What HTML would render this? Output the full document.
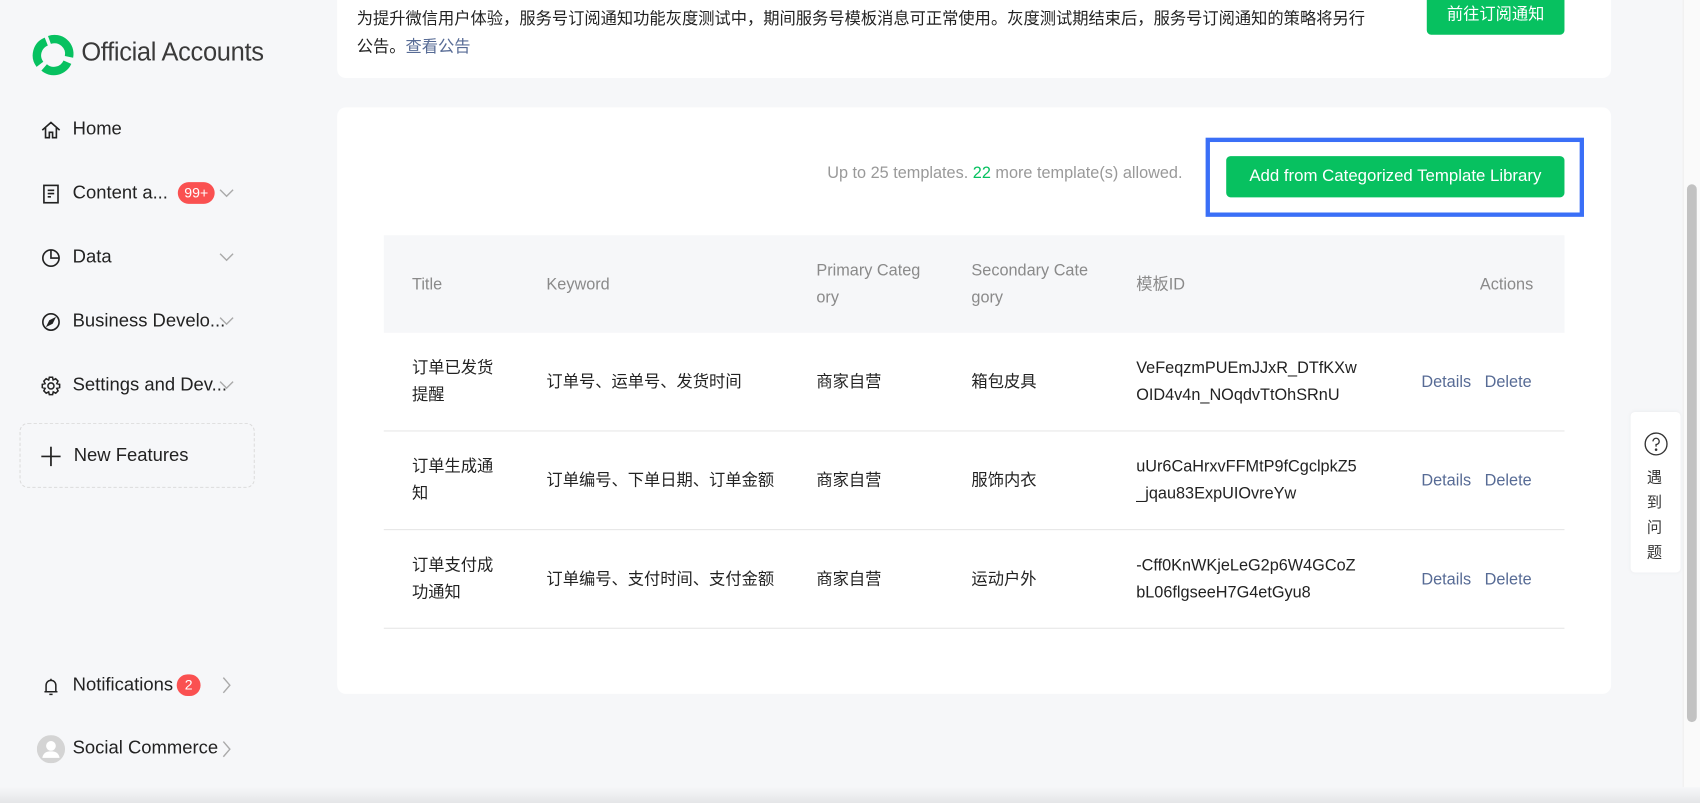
<!DOCTYPE html>
<html><head><meta charset="utf-8"><style>
*{box-sizing:border-box;margin:0;padding:0}
html,body{width:1700px;height:803px;overflow:hidden;background:#f6f7f9}
body{font-family:"Liberation Sans","Noto Sans CJK SC",sans-serif;color:#1f1f1f}
#w{position:absolute;left:0;top:0;width:1568px;height:741px;transform:scale(1.08418);transform-origin:0 0;background:#f6f7f9}
.a{position:absolute}
.nav{position:absolute;left:37px;font-size:17px;color:#222;display:flex;align-items:center;height:24px}
.nav svg{position:absolute;left:0;top:3px}
.nav span.t{position:absolute;left:30px;white-space:nowrap}
.card{position:absolute;background:#fff;border-radius:8px}
.th{position:absolute;font-size:15px;color:#8a8a8a;line-height:25px}
.td{position:absolute;font-size:15px;color:#222;line-height:25px}
.lnk{color:#576b95}
.badge{position:absolute;background:#fa5151;color:#fff;border-radius:10px;font-size:13px;text-align:center;line-height:20px;height:20px}
</style></head><body><div id="w">
<!-- logo -->
<svg class="a" style="left:30px;top:31px" width="39" height="39" viewBox="0 0 40 40">
<g fill="none" stroke="#07c160" stroke-width="8">
<path d="M7 29 A14 14 0 0 1 13 7.5"/>
<path d="M16 6 A14 14 0 0 1 34.5 22"/>
<path d="M33 27 A14 14 0 0 1 11 32"/>
</g></svg>
<div class="a" style="left:75px;top:35px;font-size:23.5px;color:#3a3a3a;letter-spacing:-0.3px">Official Accounts</div>

<div class="nav" style="top:107px"><svg width="20" height="20" viewBox="0 0 20 20" fill="none" stroke="#222" stroke-width="1.5"><path d="M2 10 L10 3 L18 10 M5 8 V17 H8.5 V12 H11.5 V17 H15 V8"/></svg><span class="t">Home</span></div>
<div class="nav" style="top:166px"><svg width="20" height="20" viewBox="0 0 20 20" fill="none" stroke="#222" stroke-width="1.5"><rect x="3.5" y="2" width="13" height="16"/><path d="M7 6.5H13M7 9.5H13M7 12.5H10"/></svg><span class="t">Content a...</span></div>
<div class="badge" style="left:164px;top:168px;width:34px">99+</div>
<div class="nav" style="top:225px"><svg width="20" height="20" viewBox="0 0 20 20" fill="none" stroke="#222" stroke-width="1.5"><circle cx="10" cy="10" r="7.5"/><path d="M10 2.5V10H17.5"/></svg><span class="t">Data</span></div>
<div class="nav" style="top:284px"><svg width="20" height="20" viewBox="0 0 20 20" fill="none" stroke="#222" stroke-width="1.5"><circle cx="10" cy="10" r="7.5"/><path d="M13 7L11 11L7 13L9 9Z" fill="#222"/></svg><span class="t">Business Develo...</span></div>
<div class="nav" style="top:343px"><svg width="20" height="20" viewBox="0 0 20 20" fill="none" stroke="#222" stroke-width="1.4"><path d="M8.5 2H11.5L12 4.5L14.3 3.3L16.5 5.5L15.4 7.8L18 8.5V11.5L15.4 12.2L16.6 14.5L14.4 16.7L12.1 15.5L11.5 18H8.5L7.9 15.5L5.6 16.7L3.4 14.5L4.6 12.2L2 11.5V8.5L4.6 7.8L3.4 5.5L5.6 3.3L7.9 4.5Z"/><circle cx="10" cy="10" r="2.8"/></svg><span class="t">Settings and Dev...</span></div>
<svg class="a" style="left:202px;top:173px" width="14" height="10" viewBox="0 0 14 10" fill="none" stroke="#aaa" stroke-width="1.3"><path d="M1 2L7 8L13 2"/></svg>
<svg class="a" style="left:202px;top:232px" width="14" height="10" viewBox="0 0 14 10" fill="none" stroke="#aaa" stroke-width="1.3"><path d="M1 2L7 8L13 2"/></svg>
<svg class="a" style="left:202px;top:291px" width="14" height="10" viewBox="0 0 14 10" fill="none" stroke="#aaa" stroke-width="1.3"><path d="M1 2L7 8L13 2"/></svg>
<svg class="a" style="left:202px;top:350px" width="14" height="10" viewBox="0 0 14 10" fill="none" stroke="#aaa" stroke-width="1.3"><path d="M1 2L7 8L13 2"/></svg>

<div class="a" style="left:18px;top:390px;width:217px;height:60px;border:1px dashed #dcdcdc;border-radius:8px"></div>
<svg class="a" style="left:38px;top:412px" width="18" height="18" viewBox="0 0 18 18" stroke="#222" stroke-width="1.6"><path d="M9 0V18M0 9H18"/></svg>
<div class="a" style="left:68px;top:410px;font-size:17px;color:#222">New Features</div>

<div class="nav" style="top:620px"><svg width="20" height="20" viewBox="0 0 20 20" fill="none" stroke="#222" stroke-width="1.4"><path d="M4 15H16M5.5 15V9A4.5 4.5 0 0 1 14.5 9V15M8.5 17.5H11.5M10 3V4.5"/></svg><span class="t">Notifications</span></div>
<div class="badge" style="left:163px;top:622px;width:22px">2</div>
<svg class="a" style="left:204px;top:624px" width="10" height="16" viewBox="0 0 10 16" fill="none" stroke="#aaa" stroke-width="1.3"><path d="M2 1L8 8L2 15"/></svg>
<svg class="a" style="left:34px;top:678px" width="26" height="26" viewBox="0 0 26 26"><circle cx="13" cy="13" r="13" fill="#d4d4d4"/><circle cx="13" cy="10" r="4.5" fill="#fff"/><path d="M5 21C6 16 9 15 13 15S20 16 21 21Z" fill="#fff"/></svg>
<div class="a" style="left:67px;top:680px;font-size:17px;color:#222">Social Commerce</div>
<svg class="a" style="left:204px;top:683px" width="10" height="16" viewBox="0 0 10 16" fill="none" stroke="#aaa" stroke-width="1.3"><path d="M2 1L8 8L2 15"/></svg>

<!-- card 1 -->
<div class="card" style="left:311px;top:-10px;width:1175px;height:82px"></div>
<div class="a" style="left:329px;top:5px;font-size:15px;line-height:26px;color:#222;width:945px">为提升微信用户体验，服务号订阅通知功能灰度测试中，期间服务号模板消息可正常使用。灰度测试期结束后，服务号订阅通知的策略将另行<br>公告。<span class="lnk">查看公告</span></div>
<div class="a" style="left:1316px;top:-4px;width:127px;height:36px;background:#07c160;border-radius:4px;color:#fff;font-size:15px;text-align:center;line-height:36px">前往订阅通知</div>

<!-- card 2 -->
<div class="card" style="left:311px;top:99px;width:1175px;height:541px"></div>
<div class="a" style="left:763px;top:151px;font-size:15px;color:#999;white-space:nowrap">Up to 25 templates. <span style="color:#07c160">22</span> more template(s) allowed.</div>
<div class="a" style="left:1112px;top:127px;width:349px;height:73px;border:4px solid #3a6ff7"></div>
<div class="a" style="left:1131px;top:144px;width:312px;height:38px;background:#07c160;border-radius:4px;color:#fff;font-size:15.5px;text-align:center;line-height:38px">Add from Categorized Template Library</div>

<div class="a" style="left:354px;top:217px;width:1089px;height:90px;background:#f6f7f9"></div>
<div class="th" style="left:380px;top:250px">Title</div>
<div class="th" style="left:504px;top:250px">Keyword</div>
<div class="th" style="left:753px;top:237px">Primary Categ<br>ory</div>
<div class="th" style="left:896px;top:237px">Secondary Cate<br>gory</div>
<div class="th" style="left:1048px;top:250px">模板ID</div>
<div class="th" style="left:1365px;top:250px">Actions</div>

<div class="a" style="left:354px;top:397px;width:1089px;height:1px;background:#e7e7e7"></div>
<div class="a" style="left:354px;top:488px;width:1089px;height:1px;background:#e7e7e7"></div>
<div class="a" style="left:354px;top:579px;width:1089px;height:1px;background:#e7e7e7"></div>

<div class="td" style="left:380px;top:327px">订单已发货<br>提醒</div>
<div class="td" style="left:504px;top:340px">订单号、运单号、发货时间</div>
<div class="td" style="left:753px;top:340px">商家自营</div>
<div class="td" style="left:896px;top:340px">箱包皮具</div>
<div class="td" style="left:1048px;top:327px">VeFeqzmPUEmJJxR_DTfKXw<br>OID4v4n_NOqdvTtOhSRnU</div>
<div class="td lnk" style="left:1311px;top:340px">Details&nbsp;&nbsp; Delete</div>

<div class="td" style="left:380px;top:418px">订单生成通<br>知</div>
<div class="td" style="left:504px;top:431px">订单编号、下单日期、订单金额</div>
<div class="td" style="left:753px;top:431px">商家自营</div>
<div class="td" style="left:896px;top:431px">服饰内衣</div>
<div class="td" style="left:1048px;top:418px">uUr6CaHrxvFFMtP9fCgclpkZ5<br>_jqau83ExpUIOvreYw</div>
<div class="td lnk" style="left:1311px;top:431px">Details&nbsp;&nbsp; Delete</div>

<div class="td" style="left:380px;top:509px">订单支付成<br>功通知</div>
<div class="td" style="left:504px;top:522px">订单编号、支付时间、支付金额</div>
<div class="td" style="left:753px;top:522px">商家自营</div>
<div class="td" style="left:896px;top:522px">运动户外</div>
<div class="td" style="left:1048px;top:509px">-Cff0KnWKjeLeG2p6W4GCoZ<br>bL06flgseeH7G4etGyu8</div>
<div class="td lnk" style="left:1311px;top:522px">Details&nbsp;&nbsp; Delete</div>

<!-- help float -->
<div class="a" style="left:1504px;top:380px;width:46px;height:148px;background:#fff;border-radius:4px;box-shadow:0 0 4px rgba(0,0,0,.05)"></div>
<svg class="a" style="left:1516px;top:398px" width="23" height="23" viewBox="0 0 24 24" fill="none" stroke="#333" stroke-width="1.3"><circle cx="12" cy="12" r="10.5"/><path d="M9 9.5A3 3 0 1 1 12 12.5V14.5"/><circle cx="12" cy="17.5" r=".6" fill="#333"/></svg>
<div class="a" style="left:1519px;top:429px;font-size:14px;line-height:23px;color:#333;width:16px">遇到问题</div>

<!-- scrollbar -->
<div class="a" style="left:1552px;top:0;width:16px;height:741px;background:#fafafa;border-left:1px solid #eee"></div>
<div class="a" style="left:1556px;top:170px;width:9px;height:496px;background:#c2c2c2;border-radius:5px"></div>
<div class="a" style="left:0;top:726px;width:1568px;height:15px;background:linear-gradient(#f6f7f9,#e4e5e7)"></div>
</div></body></html>
